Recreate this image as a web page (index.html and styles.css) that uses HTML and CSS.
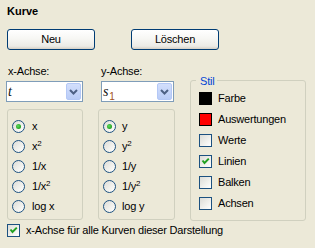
FILE: index.html
```html
<!DOCTYPE html>
<html>
<head>
<meta charset="utf-8">
<link rel="stylesheet" href="styles.css">
</head>
<body>
<div class="win">
  <div class="title">Kurve</div>
  <div class="buttons">
    <button class="btn">Neu</button>
    <button class="btn">Löschen</button>
  </div>
  <div class="main">
    <div class="col col-x">
      <div class="lbl">x-Achse:</div>
      <div class="combo">
        <span class="val"><i>t</i></span>
        <span class="drop"><svg width="15" height="17" viewBox="0 0 15 17"><path d="M4 7 L7.5 10.5 L11 7" fill="none" stroke="#4D6185" stroke-width="2"/></svg></span>
      </div>
      <div class="group radios">
        <div class="opt"><span class="radio on"></span><span>x</span></div>
        <div class="opt"><span class="radio"></span><span>x<sup>2</sup></span></div>
        <div class="opt"><span class="radio"></span><span>1/x</span></div>
        <div class="opt"><span class="radio"></span><span>1/x<sup>2</sup></span></div>
        <div class="opt"><span class="radio"></span><span>log x</span></div>
      </div>
    </div>
    <div class="col col-y">
      <div class="lbl">y-Achse:</div>
      <div class="combo">
        <span class="val"><i>s</i><span class="sub">1</span></span>
        <span class="drop"><svg width="15" height="17" viewBox="0 0 15 17"><path d="M4 7 L7.5 10.5 L11 7" fill="none" stroke="#4D6185" stroke-width="2"/></svg></span>
      </div>
      <div class="group radios">
        <div class="opt"><span class="radio on"></span><span>y</span></div>
        <div class="opt"><span class="radio"></span><span>y<sup>2</sup></span></div>
        <div class="opt"><span class="radio"></span><span>1/y</span></div>
        <div class="opt"><span class="radio"></span><span>1/y<sup>2</sup></span></div>
        <div class="opt"><span class="radio"></span><span>log y</span></div>
      </div>
    </div>
    <div class="group stil">
      <span class="legend">Stil</span>
      <div class="item"><span class="swatch black"></span><span>Farbe</span></div>
      <div class="item"><span class="swatch red"></span><span>Auswertungen</span></div>
      <div class="item"><span class="cb"></span><span>Werte</span></div>
      <div class="item"><span class="cb on"><svg width="11" height="11" viewBox="0 0 11 11"><path d="M2.5 4.5 L4.5 7 L8.8 2.6" fill="none" stroke="#21A121" stroke-width="2"/></svg></span><span>Linien</span></div>
      <div class="item"><span class="cb"></span><span>Balken</span></div>
      <div class="item"><span class="cb"></span><span>Achsen</span></div>
    </div>
  </div>
  <div class="bottom"><span class="cb on"><svg width="11" height="11" viewBox="0 0 11 11"><path d="M2.5 4.5 L4.5 7 L8.8 2.6" fill="none" stroke="#21A121" stroke-width="2"/></svg></span><span>x-Achse für alle Kurven dieser Darstellung</span></div>
</div>
</body>
</html>
```

FILE: styles.css
```css
* { box-sizing: border-box; }
html, body { margin: 0; padding: 0; }
body {
  background: #ECE9D8;
  font-family: "Liberation Sans", Arial, sans-serif;
  font-size: 11px;
  line-height: 13px;
  letter-spacing: -0.2px;
  color: #000;
  width: 315px;
  height: 248px;
  overflow: hidden;
}
.win { padding-top: 5px; }
.title { font-weight: bold; padding-left: 7px; height: 13px; letter-spacing: 0; }
.buttons { display: flex; gap: 36px; padding-left: 7px; margin-top: 11px; }
.btn {
  width: 88px;
  height: 21px;
  border: 1px solid #003C74;
  border-radius: 3px;
  background: linear-gradient(#FFFFFF 0%, #F7F7F4 45%, #ECEBE6 85%, #D6D0C5 100%);
  font: inherit;
  letter-spacing: inherit;
  color: #000;
  padding: 0;
}
.main { display: flex; padding-left: 6px; margin-top: 15px; }
.col { width: 77px; display: flex; flex-direction: column; }
.col-y { margin-left: 15px; }
.lbl { height: 13px; }
.col-x .lbl { padding-left: 2px; }
.col-y .lbl { padding-left: 3px; }
.combo {
  margin-top: 3px;
  height: 21px;
  border: 1px solid #7F9DB9;
  background: #fff;
  display: flex;
  align-items: flex-start;
}
.col-x .combo { width: 77px; }
.col-y .combo { width: 73px; margin-left: 3px; }
.val {
  padding-left: 1px;
  font-family: "Liberation Serif", "Times New Roman", serif;
  font-size: 14px;
  line-height: 19px;
  color: #111;
}
.sub {
  font-family: "Liberation Sans", Arial, sans-serif;
  font-size: 10px;
  position: relative;
  top: 4px;
  color: #A0501A;
  margin-left: 1px;
}
.drop {
  margin: 1px 1px 1px auto;
  width: 15px;
  height: 17px;
  border: 1px solid #B4C8F6;
  border-radius: 2px;
  background: linear-gradient(#D3DFFC, #B9CCF7);
  display: flex;
  align-items: center;
  justify-content: center;
}
.drop svg { display: block; margin: -1px; }
.group {
  border: 1px solid #D0D0BF;
  border-radius: 3px;
}
.radios { margin-top: 7px; height: 111px; padding-top: 6px; }
.col-x .radios { width: 76px; margin-left: 1px; }
.col-y .radios { width: 77px; }
.opt {
  height: 20px;
  display: flex;
  align-items: center;
  gap: 7px;
  padding-left: 4px;
}
.col-y .opt { gap: 6px; }
sup { font-size: 8px; line-height: 0; vertical-align: 4px; }
.radio {
  width: 13px;
  height: 13px;
  border-radius: 50%;
  border: 1px solid #1C5180;
  background: linear-gradient(135deg, #DCDCD7 0%, #F2F2EE 60%, #FFFFFF 100%);
  display: flex;
  align-items: center;
  justify-content: center;
  flex: none;
}
.radio.on::after {
  content: "";
  width: 5px;
  height: 5px;
  border-radius: 50%;
  background: radial-gradient(circle at 40% 40%, #5EDB5E, #21A121 70%);
}
.stil {
  width: 116px;
  height: 141px;
  margin-left: 15px;
  margin-top: 15px;
  padding-left: 8px;
  display: flex;
  flex-direction: column;
  align-items: flex-start;
}
.legend {
  color: #0046D5;
  background: #ECE9D8;
  margin-top: -6px;
  margin-left: -3px;
  padding: 0 3px 0 4px;
  height: 13px;
}
.item {
  height: 21px;
  display: flex;
  align-items: center;
  gap: 6px;
}
.swatch { width: 13px; height: 13px; flex: none; border: 1px solid #000; }
.swatch.black { background: #000; }
.swatch.red { background: #FF0000; }
.cb {
  width: 13px;
  height: 13px;
  flex: none;
  border: 1px solid #1C5180;
  background: linear-gradient(135deg, #DCDCD7 0%, #F2F2EE 60%, #FFFFFF 100%);
  display: flex;
  align-items: center;
  justify-content: center;
}
.cb svg { display: block; }
.bottom {
  margin-top: 3px;
  padding-left: 7px;
  height: 13px;
  display: flex;
  align-items: center;
  gap: 6px;
}
```
